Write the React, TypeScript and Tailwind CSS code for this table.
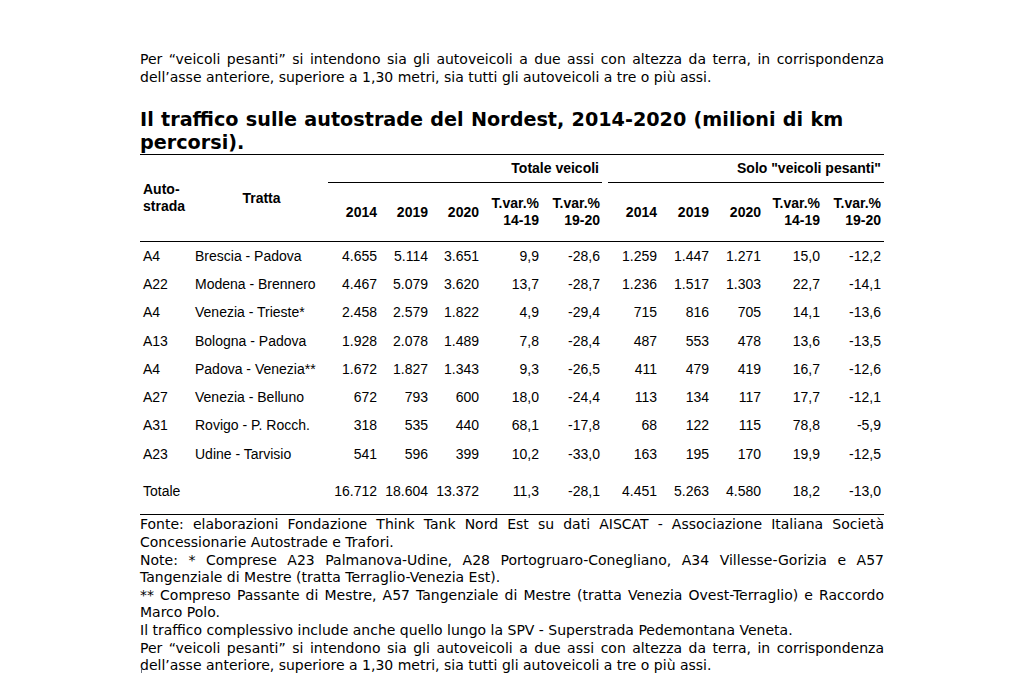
import React from "react";

const rows: string[][] = [
  ["A4", "Brescia - Padova", "4.655", "5.114", "3.651", "9,9", "-28,6", "1.259", "1.447", "1.271", "15,0", "-12,2"],
  ["A22", "Modena - Brennero", "4.467", "5.079", "3.620", "13,7", "-28,7", "1.236", "1.517", "1.303", "22,7", "-14,1"],
  ["A4", "Venezia - Trieste*", "2.458", "2.579", "1.822", "4,9", "-29,4", "715", "816", "705", "14,1", "-13,6"],
  ["A13", "Bologna - Padova", "1.928", "2.078", "1.489", "7,8", "-28,4", "487", "553", "478", "13,6", "-13,5"],
  ["A4", "Padova - Venezia**", "1.672", "1.827", "1.343", "9,3", "-26,5", "411", "479", "419", "16,7", "-12,6"],
  ["A27", "Venezia - Belluno", "672", "793", "600", "18,0", "-24,4", "113", "134", "117", "17,7", "-12,1"],
  ["A31", "Rovigo - P. Rocch.", "318", "535", "440", "68,1", "-17,8", "68", "122", "115", "78,8", "-5,9"],
  ["A23", "Udine - Tarvisio", "541", "596", "399", "10,2", "-33,0", "163", "195", "170", "19,9", "-12,5"],
];
const totale = ["Totale", "", "16.712", "18.604", "13.372", "11,3", "-28,1", "4.451", "5.263", "4.580", "18,2", "-13,0"];

const cols = "grid grid-cols-[50px_138px_52px_51px_51px_60px_61px_57px_52px_52px_59px_61px]";

function Full({ children, h }: { children: React.ReactNode; h: string }) {
  return <div className={`${h} text-justify [text-align-last:justify] whitespace-nowrap`}>{children}</div>;
}
function Last({ children, h }: { children: React.ReactNode; h: string }) {
  return <div className={`${h} whitespace-nowrap`}>{children}</div>;
}

function DataRow({ r, tall }: { r: string[]; tall?: boolean }) {
  return (
    <div className={`${cols} ${tall ? "h-[46px]" : "h-[28.3px]"} items-center`}>
      <div className="pl-[3px]">{r[0]}</div>
      <div className="pl-[5px]">{r[1]}</div>
      {r.slice(2).map((v, i) => (
        <div key={i} className="text-right pr-[3px]">
          {v}
        </div>
      ))}
    </div>
  );
}

function TVar({ y }: { y: string }) {
  return (
    <div className="row-start-2 flex items-center justify-end pr-[3px] font-bold text-right">
      <div>
        T.var.%
        <br />
        {y}
      </div>
    </div>
  );
}

export default function App() {
  const body = "font-['DejaVu_Sans',Verdana,sans-serif] text-[14px] text-black";
  const h1 = "h-[18px] leading-[18px]";
  const hn = "h-[17.6px] leading-[17.6px]";
  return (
    <div className="min-h-[673px] w-[1024px] bg-white relative overflow-hidden">
      <div className="ml-[140px] w-[744px] pt-[50px]">
        <div className={body}>
          <Full h={h1}>Per “veicoli pesanti” si intendono sia gli autoveicoli a due assi con altezza da terra, in corrispondenza</Full>
          <Last h={h1}>dell’asse anteriore, superiore a 1,30 metri, sia tutti gli autoveicoli a tre o più assi.</Last>
        </div>

        <h1 className="mt-[22px] font-['DejaVu_Sans',Verdana,sans-serif] font-bold text-[19.2px] leading-[23px] [word-spacing:0.6px] text-black border-b border-black">
          Il traffico sulle autostrade del Nordest, 2014-2020 (milioni di km
          <br />
          percorsi).
        </h1>

        <div className="font-['Liberation_Sans',Arial,sans-serif] text-[14px] leading-[17px] text-black">
          <div className={`${cols} grid-rows-[28px_58px] border-b border-black`}>
            <div className="row-span-2 col-start-1 row-start-1 flex items-center pl-[3px] font-bold">
              <div>
                Auto-
                <br />
                strada
              </div>
            </div>
            <div className="row-span-2 col-start-2 row-start-1 flex items-center justify-center font-bold pl-[5px]">
              Tratta
            </div>
            <div className="col-start-3 col-span-5 row-start-1 flex items-center justify-end pr-[3px] mr-[1px] border-b border-black font-bold">
              Totale veicoli
            </div>
            <div className="col-start-8 col-span-5 row-start-1 flex items-center justify-end pr-[3px] ml-[5px] border-b border-black font-bold">
              Solo "veicoli pesanti"
            </div>
            {["2014", "2019", "2020"].map((y, i) => (
              <div key={"a" + i} className="row-start-2 flex items-center justify-end pr-[3px] font-bold">
                {y}
              </div>
            ))}
            <TVar y="14-19" />
            <TVar y="19-20" />
            {["2014", "2019", "2020"].map((y, i) => (
              <div key={"c" + i} className="row-start-2 flex items-center justify-end pr-[3px] font-bold">
                {y}
              </div>
            ))}
            <TVar y="14-19" />
            <TVar y="19-20" />
          </div>
          <div className="border-b border-black">
            {rows.map((r, i) => (
              <DataRow key={i} r={r} />
            ))}
            <DataRow r={totale} tall />
          </div>
        </div>

        <div className={`${body} pt-[1px]`}>
          <Full h={hn}>Fonte: elaborazioni Fondazione Think Tank Nord Est su dati AISCAT - Associazione Italiana Società</Full>
          <Last h={hn}>Concessionarie Autostrade e Trafori.</Last>
          <Full h={hn}>Note: * Comprese A23 Palmanova-Udine, A28 Portogruaro-Conegliano, A34 Villesse-Gorizia e A57</Full>
          <Last h={hn}>Tangenziale di Mestre (tratta Terraglio-Venezia Est).</Last>
          <Full h={hn}>** Compreso Passante di Mestre, A57 Tangenziale di Mestre (tratta Venezia Ovest-Terraglio) e Raccordo</Full>
          <Last h={hn}>Marco Polo.</Last>
          <Last h={hn}>Il traffico complessivo include anche quello lungo la SPV - Superstrada Pedemontana Veneta.</Last>
          <Full h={hn}>Per “veicoli pesanti” si intendono sia gli autoveicoli a due assi con altezza da terra, in corrispondenza</Full>
          <Last h={hn}>dell’asse anteriore, superiore a 1,30 metri, sia tutti gli autoveicoli a tre o più assi.</Last>
        </div>
      </div>
      <div className="absolute left-[141px] top-[668px] w-px h-[5px] bg-gray-500" />
    </div>
  );
}
